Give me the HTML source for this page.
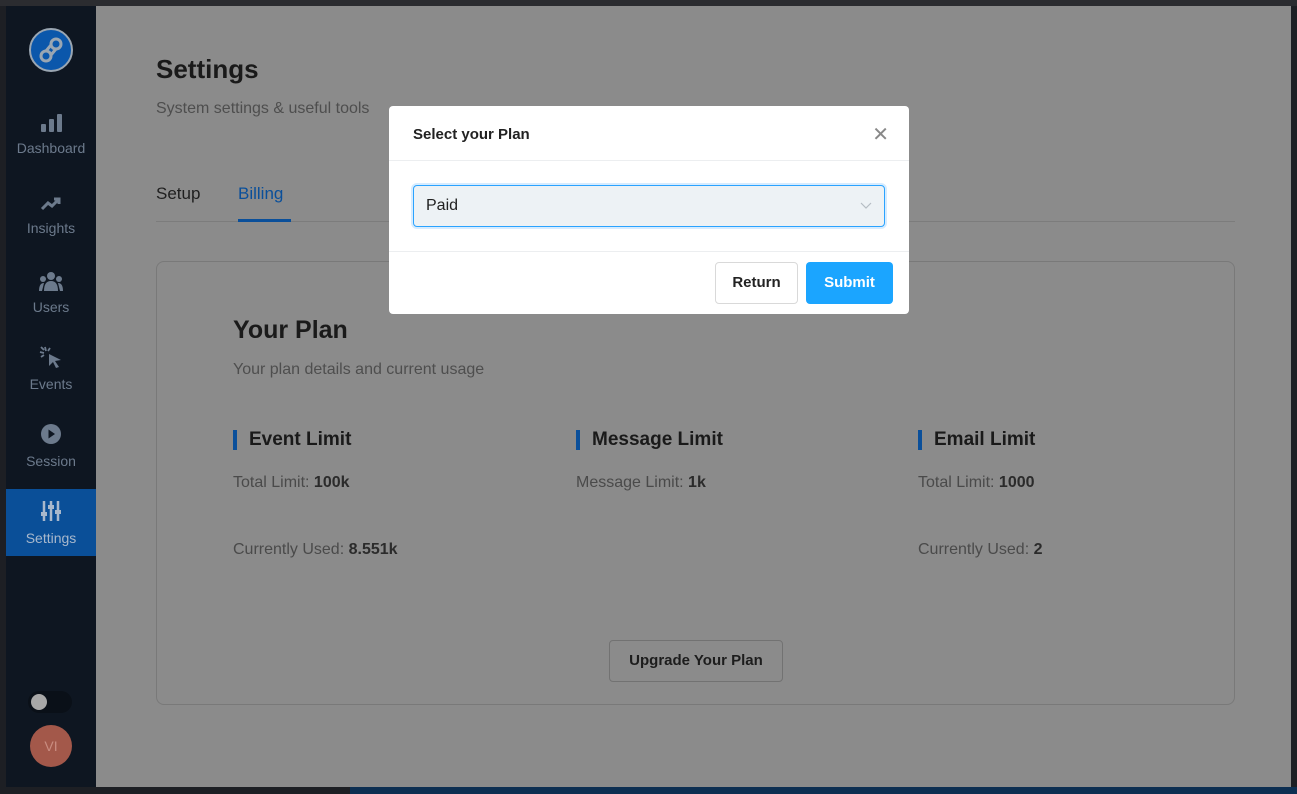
<!DOCTYPE html>
<html><head><meta charset="utf-8"><style>
*{box-sizing:border-box;margin:0;padding:0}
body{width:1297px;height:794px;overflow:hidden;background:#1d1f24;font-family:"Liberation Sans",sans-serif;position:relative}
.top{position:absolute;left:0;top:0;width:1297px;height:6px;background:#2b2c30}
.status{position:absolute;left:350px;top:787px;width:947px;height:7px;background:#0d2f52}
.win{position:absolute;left:6px;top:6px;width:1285px;height:781px;background:#8b8b8b;overflow:hidden}
.side{position:absolute;left:0;top:0;width:90px;height:781px;background:#0e1621}
.logo{position:absolute;left:23px;top:22px;width:44px;height:44px;border-radius:50%;background:#0b57ab;border:2px solid #9aa6b2}
.item{position:absolute;left:0;width:90px;text-align:center;color:#6c7a8c;font-size:14px}
.item svg{display:block;margin:0 auto 8px}
.active{background:#0a4f98;color:#a8b8cc}
.main{position:absolute;left:90px;top:0;right:0;bottom:0}
h1{position:absolute;left:60px;top:48px;font-size:26px;color:#1a1a1a;font-weight:bold}
.sub{position:absolute;left:60px;top:94px;font-size:16px;color:#4e4e4e}
.tabs{position:absolute;left:60px;top:176px;width:1079px;height:40px;border-bottom:1px solid #7c7c7c;font-size:17px}
.tabs span{position:absolute;top:2px}
.card{position:absolute;left:60px;top:255px;width:1079px;height:444px;border:1px solid #797979;border-radius:8px}
.card h2{position:absolute;left:76px;top:54px;font-size:25px;color:#1a1a1a}
.card .d{position:absolute;left:76px;top:99px;font-size:16px;color:#4e4e4e}
.col{position:absolute;top:168px}
.col h3{font-size:19px;color:#1a1a1a;border-left:4px solid #0a4f9a;padding-left:12px;line-height:20px}
.col p{font-size:16px;color:#4a4a4a;position:absolute;white-space:nowrap}
.col b{color:#2b2b2b}
.up{position:absolute;left:452px;top:378px;width:174px;height:42px;border:1px solid #727272;border-radius:4px;font-size:15px;font-weight:bold;color:#1d1d1d;text-align:center;line-height:40px}
.modal{position:absolute;left:389px;top:106px;width:520px;height:208px;background:#fff;border-radius:4px}
.mh{height:55px;border-bottom:1px solid #eceef0;padding:20px 24px;font-size:15px;font-weight:bold;color:#222}
.x{position:absolute;right:20px;top:16px;font-size:20px;color:#888;font-weight:normal}
.sel{position:absolute;left:24px;top:79px;width:472px;height:42px;background:#edf2f5;border:1px solid #2aa3ff;border-radius:4px;box-shadow:0 0 0 2px #d6ecff;font-size:16px;color:#222;padding:11px 12px}
.mf{position:absolute;left:0;top:145px;width:520px;border-top:1px solid #eceef0}
.btn{position:absolute;top:156px;height:42px;border-radius:4px;font-size:15px;font-weight:bold;text-align:center;line-height:42px}
</style></head><body>
<div class="top"></div>
<div class="status"></div>
<div class="win">
 <div class="side">
  <div class="logo"><svg width="40" height="40" viewBox="0 0 40 40"><g fill="none" stroke="#9aa6b2" stroke-width="3"><circle cx="25" cy="14" r="5"/><circle cx="15" cy="26" r="5"/><path d="M20 15 L15 21 M25 19 L20 25"/></g></svg></div>
  <div class="item" style="top:108px"><svg width="22" height="18"><rect x="1" y="10" width="5" height="8" rx="1" fill="#6c7a8c"/><rect x="9" y="5" width="5" height="13" rx="1" fill="#6c7a8c"/><rect x="17" y="0" width="5" height="18" rx="1" fill="#6c7a8c"/></svg>Dashboard</div>
  <div class="item" style="top:190px"><svg width="22" height="16"><path d="M2 13 L8 7 L12 10 L19 3 M14 3 H19 V8" fill="none" stroke="#6c7a8c" stroke-width="3"/></svg>Insights</div>
  <div class="item" style="top:265px"><svg width="24" height="20"><circle cx="12" cy="5" r="4" fill="#6c7a8c"/><circle cx="4" cy="8" r="3" fill="#6c7a8c"/><circle cx="20" cy="8" r="3" fill="#6c7a8c"/><path d="M5 20 Q5 10 12 10 Q19 10 19 20Z M0 20 Q0 12 5 12 L3 20Z M24 20 Q24 12 19 12 L21 20Z" fill="#6c7a8c"/></svg>Users</div>
  <div class="item" style="top:340px"><svg width="24" height="22"><path d="M10 8 L22 14 L16 15 L20 21 L17 22 L14 16 L10 20Z" fill="#6c7a8c"/><path d="M6 1 L7 5 M1 6 L5 7 M2 1 L5 4 M11 2 L9 5 M2 11 L5 9" stroke="#6c7a8c" stroke-width="1.8"/></svg>Events</div>
  <div class="item" style="top:417px"><svg width="22" height="22"><circle cx="11" cy="11" r="10" fill="#6c7a8c"/><path d="M8.5 6.5 L15 11 L8.5 15.5Z" fill="#0e1621"/></svg>Session</div>
  <div class="item active" style="top:483px;height:67px;padding-top:11px"><svg width="22" height="22"><g stroke="#a8b8cc" stroke-width="2.5"><path d="M4 1V21M11 1V21M18 1V21"/></g><rect x="1" y="12" width="6" height="4" fill="#a8b8cc"/><rect x="8" y="5" width="6" height="4" fill="#a8b8cc"/><rect x="15" y="10" width="6" height="4" fill="#a8b8cc"/></svg>Settings</div>
  <div style="position:absolute;left:22px;top:685px;width:44px;height:22px;border-radius:11px;background:#0a1018"></div>
  <div style="position:absolute;left:25px;top:688px;width:16px;height:16px;border-radius:50%;background:#a8a8a8"></div>
  <div style="position:absolute;left:24px;top:719px;width:42px;height:42px;border-radius:50%;background:#a3584a;color:#c98c80;font-size:14px;text-align:center;line-height:42px">VI</div>
 </div>
 <div class="main">
  <h1>Settings</h1>
  <div class="sub">System settings &amp; useful tools</div>
  <div class="tabs"><span style="left:0;color:#1f1f1f">Setup</span><span style="left:82px;color:#0a4f9a;border-bottom:3px solid #0a4f9a;padding-bottom:15px;width:53px">Billing</span></div>
  <div class="card">
   <h2>Your Plan</h2>
   <div class="d">Your plan details and current usage</div>
   <div class="col" style="left:76px"><h3>Event Limit</h3><p style="top:44px">Total Limit: <b>100k</b></p><p style="top:111px">Currently Used: <b>8.551k</b></p></div>
   <div class="col" style="left:419px"><h3>Message Limit</h3><p style="top:44px">Message Limit: <b>1k</b></p></div>
   <div class="col" style="left:761px"><h3>Email Limit</h3><p style="top:44px">Total Limit: <b>1000</b></p><p style="top:111px">Currently Used: <b>2</b></p></div>
   <div class="up">Upgrade Your Plan</div>
  </div>
 </div>
</div>
<div class="modal">
 <div class="mh">Select your Plan<span class="x">✕</span></div>
 <div class="sel">Paid<svg style="position:absolute;right:12px;top:16px" width="12" height="8"><path d="M1 1 L6 6 L11 1" fill="none" stroke="#b5bcc3" stroke-width="1.2"/></svg></div>
 <div class="mf"></div>
 <div class="btn" style="left:326px;width:83px;border:1px solid #d9d9d9;color:#222;line-height:40px">Return</div>
 <div class="btn" style="left:417px;width:87px;background:#1ba5ff;color:#fff">Submit</div>
</div>
</body></html>
